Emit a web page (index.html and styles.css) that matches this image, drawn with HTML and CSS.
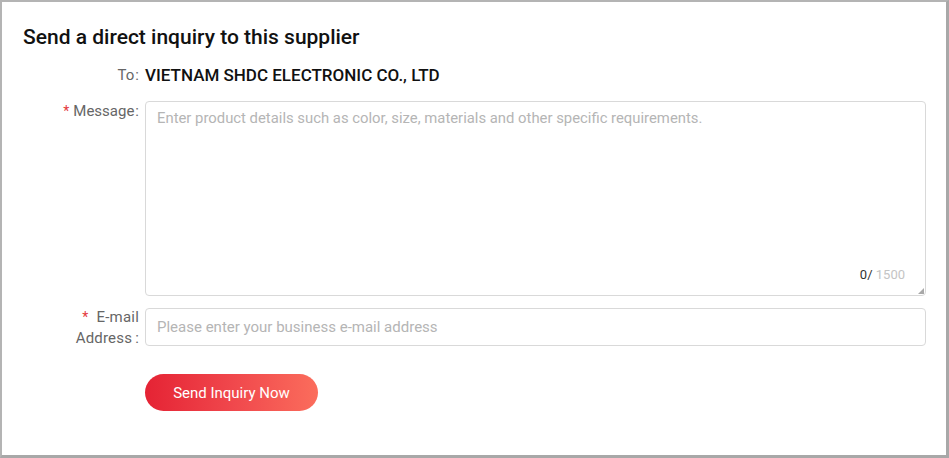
FILE: index.html
```html
<!DOCTYPE html>
<html lang="en">
<head>
<meta charset="utf-8">
<title>Send a direct inquiry</title>
<link rel="stylesheet" href="styles.css">
</head>
<body>
<div class="inquiry">
  <h2 class="inquiry-title">Send a direct inquiry to this supplier</h2>
  <div class="form">
    <div class="row row-to">
      <div class="label">To<span class="colon">:</span></div>
      <div class="value-to">VIETNAM SHDC ELECTRONIC CO., LTD</div>
    </div>
    <div class="row row-message">
      <div class="label"><span class="star">*</span>Message<span class="colon">:</span></div>
      <div class="field">
        <textarea class="textarea" placeholder="Enter product details such as color, size, materials and other specific requirements."></textarea>
        <div class="counter"><span class="count">0/</span> <span class="max">1500</span></div>
        <span class="grip"></span>
      </div>
    </div>
    <div class="row row-email">
      <div class="label label-email"><span class="star">*</span> E-mail Address<span class="colon">:</span></div>
      <div class="field">
        <input class="input" type="text" placeholder="Please enter your business e-mail address">
      </div>
    </div>
    <div class="row row-submit">
      <div class="label"></div>
      <div class="field">
        <button class="btn-send" type="button">Send Inquiry Now</button>
      </div>
    </div>
  </div>
</div>
</body>
</html>
```

FILE: styles.css
```css
* { box-sizing: border-box; }

html, body {
  margin: 0;
  padding: 0;
  background: #ffffff;
}

body {
  font-family: Roboto, "Liberation Sans", Arial, sans-serif;
  color: #222;
}

.inquiry {
  width: 949px;
  height: 458px;
  border-top: 2px solid #b4b4b4;
  border-left: 2px solid #b4b4b4;
  border-right: 3px solid #a8a8a8;
  border-bottom: 3px solid #a8a8a8;
  padding: 23px 20px 0 21px;
  background: #fff;
}

.inquiry-title {
  margin: 0;
  font-size: 21px;
  line-height: 24px;
  font-weight: 500;
  color: #111;
}

.form {
  margin-top: 16px;
  display: flex;
  flex-direction: column;
}

.row {
  display: flex;
  align-items: flex-start;
}

.label {
  width: 116px;
  padding-left: 28px;
  margin-right: 6px;
  text-align: right;
  font-size: 15px;
  line-height: 20px;
  color: #666;
  flex: none;
}

.label-email {
  line-height: 21px;
  margin-top: -1px;
  padding-left: 40px;
  letter-spacing: 0.2px;
}

.colon {
  margin-left: 1px;
}

.label-email .colon {
  margin-left: 3px;
}

.star {
  color: #e4393c;
  font-size: 14px;
  margin-right: 4px;
}

.value-to {
  font-size: 17px;
  line-height: 20px;
  font-weight: 500;
  color: #111;
}

.row-message {
  margin-top: 16px;
}

.field {
  position: relative;
  flex: 1;
}

.textarea {
  display: block;
  width: 100%;
  height: 195px;
  border: 1px solid #d9d9d9;
  border-radius: 4px;
  padding: 6px 11px;
  font-family: Roboto, "Liberation Sans", Arial, sans-serif;
  font-size: 14.85px;
  line-height: 20px;
  color: #333;
  outline: none;
  resize: none;
}

.textarea::placeholder,
.input::placeholder {
  color: #b5b5b5;
}

.counter {
  position: absolute;
  right: 21px;
  bottom: 13px;
  font-size: 13px;
  line-height: 16px;
}

.count {
  color: #333;
}

.max {
  color: #c4c4c4;
}

.grip {
  position: absolute;
  right: 2px;
  bottom: 2px;
  width: 0;
  height: 0;
  border-left: 6px solid transparent;
  border-bottom: 6px solid #a8a8a8;
}

.row-email {
  margin-top: 12px;
}

.input {
  display: block;
  width: 100%;
  height: 38px;
  border: 1px solid #d9d9d9;
  border-radius: 4px;
  padding: 0 11px;
  font-family: Roboto, "Liberation Sans", Arial, sans-serif;
  font-size: 15px;
  color: #333;
  outline: none;
}

.row-submit {
  margin-top: 25px;
}

.btn-send {
  display: block;
  width: 173px;
  height: 37px;
  border: none;
  border-radius: 19px;
  background: linear-gradient(90deg, #e52334 0%, #f0474c 50%, #fb6d5c 100%);
  color: #fff;
  font-family: Roboto, "Liberation Sans", Arial, sans-serif;
  font-size: 15px;
  padding: 0;
  cursor: pointer;
}
```
